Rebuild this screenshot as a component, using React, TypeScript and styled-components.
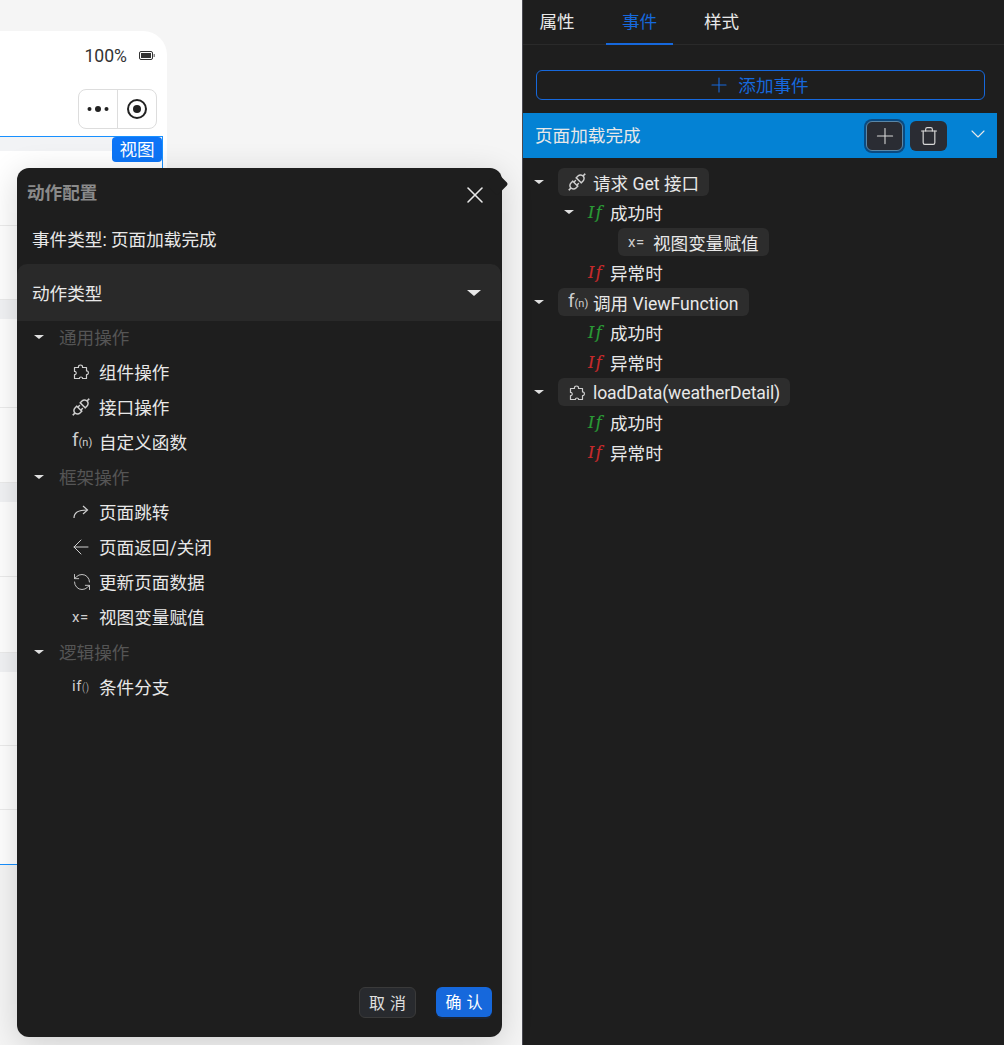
import React from "react";
import styled, { createGlobalStyle } from "styled-components";
import { Plus, Trash, X, ChevronDown, RefreshCcw, ArrowLeft } from "lucide-react";
import { AiOutlineApi } from "react-icons/ai";

const Global = createGlobalStyle`
  html, body { margin: 0; padding: 0; height: 100%; background: #f5f5f5; }
  * { box-sizing: border-box; }
  body { font-family: Roboto, "Noto Sans CJK SC", sans-serif; font-size: 17.6px; overflow: hidden; }
`;

const Page = styled.div`
  display: flex;
  width: 1004px;
  height: 1045px;
  overflow: hidden;
`;

const Canvas = styled.div`
  position: relative;
  width: 522px;
  height: 100%;
  padding-top: 31px;
  background: #f5f5f5;
`;

const Phone = styled.div`
  width: 167px;
  background: #fff;
  border-radius: 0 24px 0 0;
`;

const StatusBar = styled.div`
  height: 44px;
  display: flex;
  align-items: center;
  justify-content: flex-end;
  gap: 12px;
  padding: 5px 12px 0 0;
  color: #333;
  font-size: 17.6px;
`;

const NavBar = styled.div`
  height: 61px;
  display: flex;
  justify-content: flex-end;
  padding: 14px 10px 0 0;
`;

const Capsule = styled.div`
  width: 79px;
  height: 40px;
  display: flex;
  border: 1px solid #ddd;
  border-radius: 8px;
`;

const CapsuleCell = styled.div`
  flex: 1;
  display: flex;
  align-items: center;
  justify-content: center;
  & + & { border-left: 1px solid #ddd; }
`;

const ViewFrame = styled.div`
  position: relative;
  width: 163px;
  height: 729px;
  border: 1px solid #1890ff;
  border-left: none;
  display: flex;
  flex-direction: column;
`;

const ViewBadge = styled.div`
  position: absolute;
  top: 0;
  right: 0;
  width: 50px;
  height: 25px;
  background: #0d75f7;
  color: #fff;
  border-radius: 4px;
  font-size: 17.6px;
  line-height: 27px;
  text-align: center;
`;

const Band = styled.div<{ $h: number }>`
  height: ${(p) => p.$h}px;
  background: #f2f3f5;
`;

const ListItem = styled.div<{ $h: number }>`
  height: ${(p) => p.$h}px;
  border-bottom: 1px solid #ececec;
`;

const Popover = styled.div`
  position: absolute;
  left: 17px;
  top: 168px;
  width: 485px;
  height: 869px;
  display: flex;
  flex-direction: column;
  background: #1e1e1e;
  border-radius: 12px;
  box-shadow: 0 6px 32px rgba(0, 0, 0, 0.16);
  color: #e8e8e8;
`;

const Arrow = styled.div`
  position: absolute;
  left: 472px;
  top: 8px;
  width: 16px;
  height: 16px;
  background: #1e1e1e;
  transform: rotate(45deg);
  border-radius: 2px;
`;

const PopTitleRow = styled.div`
  position: relative;
  height: 50px;
  display: flex;
  align-items: center;
  justify-content: space-between;
  padding: 0 13px 4px 10px;
`;

const PopTitle = styled.div`
  font-size: 17.6px;
  font-weight: 700;
  color: #8a8a8a;
`;

const CloseButton = styled.div`
  display: flex;
  color: #e8e8e8;
  margin-top: 8px;
`;

const EventType = styled.div`
  height: 46px;
  padding-left: 15px;
  line-height: 45px;
`;

const TypeHeader = styled.div`
  height: 57px;
  width: 484px;
  display: flex;
  align-items: center;
  justify-content: space-between;
  padding: 0 20px 0 15px;
  background: #292929;
  border-radius: 10px 10px 0 0;
`;

const Caret = styled.span<{ $size?: number; $color?: string }>`
  display: inline-block;
  width: 0;
  height: 0;
  border-left: ${(p) => p.$size ?? 5}px solid transparent;
  border-right: ${(p) => p.$size ?? 5}px solid transparent;
  border-top: ${(p) => Math.round((p.$size ?? 5) * 0.8)}px solid ${(p) => p.$color ?? "#e0e0e0"};
`;

const ActionList = styled.div`
  display: flex;
  flex-direction: column;
`;

const GroupRow = styled.div`
  height: 35px;
  display: flex;
  align-items: center;
  padding: 0 0 4px 17px;
  gap: 15px;
  color: #555;
`;

const ActionRow = styled.div`
  height: 35px;
  display: flex;
  align-items: center;
  padding: 0 0 4px 55px;
  color: #e8e8e8;
`;

const IconSlot = styled.span`
  width: 27px;
  height: 20px;
  display: flex;
  align-items: center;
  color: #cfcfcf;
  flex: none;
`;

const FnText = styled.span`
  font-size: 19px;
  line-height: 20px;
  & small { font-size: 11px; }
`;

const AssignText = styled.span`
  font-size: 15px;
  letter-spacing: 0.6px;
  line-height: 20px;
  & small { font-size: 10px; font-weight: 300; }
`;

const Footer = styled.div`
  margin-top: auto;
  display: flex;
  justify-content: flex-end;
  gap: 20px;
  padding: 0 10px 19px 0;
`;

const CancelButton = styled.div`
  width: 57px;
  height: 31px;
  background: #282a2e;
  border: 1px solid #3a3a3a;
  border-radius: 6px;
  color: #e0e0e0;
  font-size: 16px;
  line-height: 31px;
  text-align: center;
  word-spacing: 1px;
`;

const ConfirmButton = styled.div`
  width: 56px;
  height: 30px;
  background: #1668dc;
  border-radius: 6px;
  color: #fff;
  font-size: 16px;
  line-height: 32px;
  text-align: center;
  word-spacing: 1px;
  box-shadow: 0 2px 0 rgba(5, 95, 255, 0.1);
`;

const Panel = styled.div`
  width: 482px;
  height: 100%;
  background: #1e1e1e;
  border-left: 1px solid #4a4a52;
  color: #e8e8e8;
`;

const Tabs = styled.div`
  height: 45px;
  display: flex;
  gap: 15px;
  border-bottom: 1px solid #2a2a2a;
`;

const Tab = styled.div<{ $active?: boolean }>`
  width: 67px;
  height: 45px;
  display: flex;
  justify-content: center;
  padding-top: 9px;
  line-height: 26px;
  color: ${(p) => (p.$active ? "#1668dc" : "#e8e8e8")};
  border-bottom: 2px solid ${(p) => (p.$active ? "#1668dc" : "transparent")};
  &:first-child { width: 68px; }
`;

const AddButton = styled.div`
  margin: 25px 0 13px 13px;
  width: 449px;
  height: 30px;
  display: flex;
  align-items: center;
  justify-content: center;
  gap: 7px;
  padding: 0 5px 1px 0;
  border: 1px solid #1668dc;
  border-radius: 6px;
  color: #1668dc;
`;

const EventBar = styled.div`
  width: 474px;
  height: 45px;
  display: flex;
  align-items: center;
  padding: 0 12px;
  background: #0482d4;
  color: #e8e8e8;
`;

const EventTitle = styled.div`
  flex: 1;
  padding-bottom: 3px;
`;

const BarButton = styled.div<{ $focus?: boolean }>`
  width: 37px;
  height: 30px;
  display: flex;
  align-items: center;
  justify-content: center;
  background: #2a2c33;
  border-radius: 6px;
  color: #d8d8d8;
  margin-right: 7px;
  ${(p) => p.$focus && "border: 1px solid #5a87a8; box-shadow: 0 0 0 2px #0b4a80;"}
`;

const BarChevron = styled.div`
  display: flex;
  margin: 0 -5px 3px 12px;
  color: #e8e8e8;
`;

const Tree = styled.div`
  padding-top: 9px;
`;

const TreeRow = styled.div<{ $level: number }>`
  height: 30px;
  display: flex;
  align-items: center;
  padding-left: ${(p) => 2 + p.$level * 30}px;
`;

const CaretSlot = styled.span`
  width: 28px;
  flex: none;
  display: flex;
  justify-content: center;
`;

const Chip = styled.div<{ $tight?: boolean }>`
  margin-left: 5px;
  height: 28px;
  display: flex;
  align-items: center;
  gap: 7px;
  padding: ${(p) => (p.$tight ? "2px" : "0")} 10px 0;
  background: #2d2d2d;
  border-radius: 6px;
  letter-spacing: ${(p) => (p.$tight ? "-0.13px" : "0")};
`;

const ChipIcon = styled.span`
  width: 18px;
  display: flex;
  color: #cfcfcf;
  letter-spacing: 0;
`;

const Condition = styled.div`
  margin-left: 5px;
  display: flex;
  align-items: center;
  gap: 5px;
`;

const IfMark = styled.span<{ $ok: boolean }>`
  width: 17px;
  font-family: "DejaVu Serif", serif;
  font-style: italic;
  font-size: 16px;
  letter-spacing: 1.5px;
  -webkit-text-stroke: 0.2px currentColor;
  color: ${(p) => (p.$ok ? "#2a9a35" : "#c82a2c")};
`;

const Redirect = () => (
  <svg width="18" height="18" viewBox="0 0 18 18" fill="none" stroke="currentColor" strokeWidth="1.2">
    <path d="M2 15c0-5 4-8 13-8" />
    <path d="M11 3l4.500 4-4.500 4" />
  </svg>
);

const PlugIcon = styled(AiOutlineApi)`
  flex: none;
  margin: 0 -2px;
  width: 22px;
  height: 22px;
`;

const BackIcon = styled(ArrowLeft)`
  flex: none;
  margin-left: -3px;
`;

const Ext = () => (
  <svg width="18" height="18" viewBox="0 0 18 18" fill="none" stroke="currentColor" strokeWidth="1.2" strokeLinejoin="round">
    <path d="M6.500 4C6 1.300 11 1.300 10.500 4v.500H14.500V8C17 7.500 17 12 14.500 11.500V15.500H10.500C11 13.500 7 13.500 7.500 15.500H2.500V11.500C4.800 12 4.800 8 2.500 8.500V4.500H6.500Z" />
  </svg>
);
const Fn = () => (
  <FnText>
    f<small>(n)</small>
  </FnText>
);
const Assign = () => <AssignText>x=</AssignText>;

const Branch = ({ ok, level, open }: { ok: boolean; level: number; open?: boolean }) => (
  <TreeRow $level={level}>
    <CaretSlot>{open && <Caret />}</CaretSlot>
    <Condition>
      <IfMark $ok={ok}>If</IfMark>
      {ok ? "成功时" : "异常时"}
    </Condition>
  </TreeRow>
);

const Group = ({ label }: { label: string }) => (
  <GroupRow>
    <Caret />
    {label}
  </GroupRow>
);

const Action = ({ icon, label }: { icon: React.ReactNode; label: string }) => (
  <ActionRow>
    <IconSlot>{icon}</IconSlot>
    {label}
  </ActionRow>
);

export default function App() {
  return (
    <Page>
      <Global />
      <Canvas>
        <Phone>
          <StatusBar>
            100%
            <svg width="16" height="10" viewBox="0 0 16 10">
              <rect x="0.500" y="0.500" width="13" height="8" rx="1.500" fill="none" stroke="#333" />
              <rect x="2" y="2" width="10" height="5" fill="#333" />
              <rect x="14.500" y="3" width="1.500" height="3" fill="#888" />
            </svg>
          </StatusBar>
          <NavBar>
            <Capsule>
              <CapsuleCell>
                <svg width="22" height="8" viewBox="0 0 22 8" fill="#222">
                  <circle cx="2.500" cy="4" r="2" />
                  <circle cx="11" cy="4" r="3" />
                  <circle cx="19.500" cy="4" r="2" />
                </svg>
              </CapsuleCell>
              <CapsuleCell>
                <svg width="22" height="22" viewBox="0 0 22 22">
                  <circle cx="11" cy="11" r="9" fill="none" stroke="#222" strokeWidth="2" />
                  <circle cx="11" cy="11" r="4" fill="#222" />
                </svg>
              </CapsuleCell>
            </Capsule>
          </NavBar>
          <ViewFrame>
            <ViewBadge>视图</ViewBadge>
            <Band $h={14} />
            <ListItem $h={75} />
            <ListItem $h={74} />
            <Band $h={19} />
            <ListItem $h={89} />
            <ListItem $h={75} />
            <Band $h={19} />
            <ListItem $h={75} />
            <ListItem $h={76} />
            <Band $h={19} />
            <ListItem $h={74} />
            <ListItem $h={64} />
          </ViewFrame>
        </Phone>
        <Popover>
          <Arrow />
          <PopTitleRow>
            <PopTitle>动作配置</PopTitle>
            <CloseButton>
              <X size={28} strokeWidth={1.3} />
            </CloseButton>
          </PopTitleRow>
          <EventType>事件类型: 页面加载完成</EventType>
          <TypeHeader>
            动作类型
            <Caret $size={7} $color="#e8e8e8" />
          </TypeHeader>
          <ActionList>
            <Group label="通用操作" />
            <Action icon={<Ext />} label="组件操作" />
            <Action icon={<PlugIcon />} label="接口操作" />
            <Action icon={<Fn />} label="自定义函数" />
            <Group label="框架操作" />
            <Action icon={<Redirect />} label="页面跳转" />
            <Action icon={<BackIcon size={24} strokeWidth={1} />} label="页面返回/关闭" />
            <Action icon={<RefreshCcw size={20} strokeWidth={1.1} />} label="更新页面数据" />
            <Action icon={<Assign />} label="视图变量赋值" />
            <Group label="逻辑操作" />
            <Action icon={<AssignText>if<small>()</small></AssignText>} label="条件分支" />
          </ActionList>
          <Footer>
            <CancelButton>取 消</CancelButton>
            <ConfirmButton>确 认</ConfirmButton>
          </Footer>
        </Popover>
      </Canvas>
      <Panel>
        <Tabs>
          <Tab>属性</Tab>
          <Tab $active>事件</Tab>
          <Tab>样式</Tab>
        </Tabs>
        <AddButton>
          <Plus size={24} strokeWidth={1.1} />
          添加事件
        </AddButton>
        <EventBar>
          <EventTitle>页面加载完成</EventTitle>
          <BarButton $focus>
            <Plus size={26} strokeWidth={1} />
          </BarButton>
          <BarButton>
            <Trash size={20} strokeWidth={1.4} />
          </BarButton>
          <BarChevron>
            <ChevronDown size={24} strokeWidth={1.1} />
          </BarChevron>
        </EventBar>
        <Tree>
          <TreeRow $level={0}>
            <CaretSlot><Caret /></CaretSlot>
            <Chip><ChipIcon><PlugIcon /></ChipIcon>请求 Get 接口</Chip>
          </TreeRow>
          <Branch ok level={1} open />
          <TreeRow $level={2}>
            <CaretSlot />
            <Chip><ChipIcon><Assign /></ChipIcon>视图变量赋值</Chip>
          </TreeRow>
          <Branch ok={false} level={1} />
          <TreeRow $level={0}>
            <CaretSlot><Caret /></CaretSlot>
            <Chip><ChipIcon><Fn /></ChipIcon>调用 ViewFunction</Chip>
          </TreeRow>
          <Branch ok level={1} />
          <Branch ok={false} level={1} />
          <TreeRow $level={0}>
            <CaretSlot><Caret /></CaretSlot>
            <Chip $tight><ChipIcon><Ext /></ChipIcon>loadData(weatherDetail)</Chip>
          </TreeRow>
          <Branch ok level={1} />
          <Branch ok={false} level={1} />
        </Tree>
      </Panel>
    </Page>
  );
}
